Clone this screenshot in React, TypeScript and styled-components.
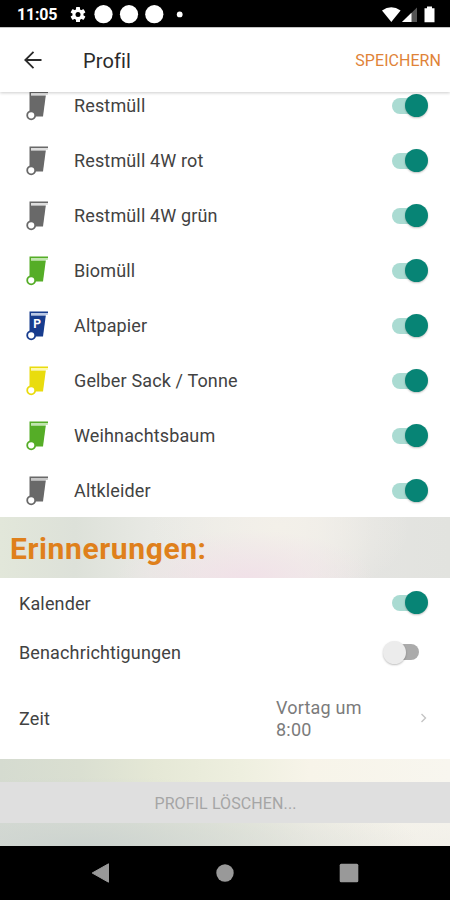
import React from 'react';
import styled, { createGlobalStyle } from 'styled-components';

const GlobalStyle = createGlobalStyle`
  * { box-sizing: border-box; }
  body { margin: 0; background: #fff; font-family: Roboto, "Liberation Sans", sans-serif; }
`;

const Screen = styled.div`
  width: 450px;
  height: 900px;
  display: flex;
  flex-direction: column;
  overflow: hidden;
  background: #fff;
  color: #424242;
`;

const StatusBar = styled.header`
  flex: 0 0 27px;
  display: flex;
  align-items: center;
  justify-content: space-between;
  padding: 2px 14px 0 17px;
  background: #000;
  color: #fff;
`;

const Clock = styled.span`
  width: 53px;
  padding-top: 1px;
  font-size: 16px;
  line-height: 20px;
  font-weight: 700;
  letter-spacing: -0.2px;
`;

const StatusGroup = styled.div`
  display: flex;
  align-items: center;
`;

const Toolbar = styled.div`
  flex: 0 0 65px;
  display: flex;
  align-items: center;
  padding: 2px 9px 0 21px;
  background: #fff;
  border-top: 1px solid #c4c4c4;
  box-shadow: 0 1px 3px rgba(0, 0, 0, 0.2);
  z-index: 1;
`;

const BackButton = styled.button`
  display: flex;
  margin-top: -2px;
  padding: 0;
  border: 0;
  background: none;
`;

const Title = styled.h1`
  flex: 1;
  margin: 0 0 0 38px;
  font-size: 20px;
  font-weight: 400;
  line-height: 24px;
  letter-spacing: 0.1px;
  color: #2a2a2a;
`;

const SaveButton = styled.button`
  padding: 0;
  border: 0;
  background: none;
  font: 400 16px/20px Roboto, sans-serif;
  letter-spacing: 0.05px;
  color: #df8338;
`;

const BinList = styled.ul`
  flex: 0 0 425px;
  display: flex;
  flex-direction: column;
  overflow: hidden;
  margin: 0;
  padding: 0;
  list-style: none;
`;

const BinRow = styled.li`
  flex: 0 0 55px;
  display: flex;
  align-items: center;
  padding: 0 21px 0 26px;

  &:first-child {
    margin-top: -14px;
  }
`;

const Label = styled.span<{ $indent?: number }>`
  flex: 1;
  margin-left: ${({ $indent = 0 }) => $indent}px;
  padding-top: ${({ $indent = 0 }) => ($indent ? 0 : 2)}px;
  font-size: 18px;
  line-height: 22px;
  letter-spacing: 0.14px;
`;

const Track = styled.span<{ $on: boolean }>`
  display: flex;
  align-items: center;
  justify-content: ${({ $on }) => ($on ? 'flex-end' : 'flex-start')};
  width: 28px;
  height: 16px;
  margin-right: ${({ $on }) => ($on ? 9 : 10)}px;
  border-radius: 8px;
  background: ${({ $on }) => ($on ? '#aadbd2' : '#ababab')};
`;

const Knob = styled.span<{ $on: boolean }>`
  flex: 0 0 23px;
  height: 23px;
  margin: ${({ $on }) => ($on ? '0 -8px 0 0' : '0 0 0 -8px')};
  border-radius: 50%;
  background: ${({ $on }) => ($on ? '#078475' : '#ececec')};
  box-shadow: 0 1px 2px rgba(0, 0, 0, 0.25);
`;

const SectionHeader = styled.h2`
  flex: 0 0 61px;
  display: flex;
  align-items: center;
  margin: 0;
  padding: 3px 10px 0;
  background:
    radial-gradient(ellipse 130px 48px at 245px 61px, #f1e1e8 0%, rgba(241, 225, 232, 0) 100%),
    radial-gradient(ellipse 130px 75px at 280px 10px, #f3f0e9 0%, rgba(243, 240, 233, 0) 100%),
    linear-gradient(90deg, #e2e7da 0, #dde1d9 75px, #e8e9e4 150px, #efedea 300px, #e4e4e1 370px, #e2e3df 450px);
  color: #df801b;
  font-size: 30px;
  line-height: 36px;
  letter-spacing: 0.6px;
  font-weight: 700;
`;

const Settings = styled.section`
  flex: 0 0 181px;
  display: flex;
  flex-direction: column;
  background: #fff;
`;

const SettingRow = styled.div<{ $height: number }>`
  flex: 0 0 ${({ $height }) => $height}px;
  display: flex;
  align-items: center;
  padding: 0 21px 0 19px;
`;

const TimeValue = styled.span`
  width: 100px;
  margin-right: 43px;
  padding-top: 2px;
  font-size: 18px;
  line-height: 22px;
  letter-spacing: 0.2px;
  color: #7b7b7b;
`;

const Footer = styled.div`
  flex: 0 0 87px;
  display: flex;
  flex-direction: column;
  justify-content: center;
  background:
    radial-gradient(ellipse 340px 70px at 80px 87px, #ccd3cf 0%, rgba(204, 211, 207, 0) 100%),
    linear-gradient(180deg, rgba(236, 234, 228, 0) 30%, rgba(236, 234, 228, 0.5) 100%),
    linear-gradient(90deg, #d5dbd0 0, #dadfd1 80px, #e5e8d6 155px, #eeefdf 240px, #f7f4e9 310px, #f8f6ef 450px);
`;

const DeleteButton = styled.button`
  height: 41px;
  padding: 2px 0 0 1px;
  border: 0;
  background: #dfdfdf;
  font: 400 16px/20px Roboto, sans-serif;
  letter-spacing: 0.1px;
  color: #a5a5a5;
`;

const NavBar = styled.nav`
  flex: 0 0 54px;
  display: flex;
  align-items: center;
  justify-content: space-between;
  padding: 0 91px;
  background: #000;
`;

function Switch({ on }: { on: boolean }) {
  return (
    <Track $on={on} role="switch" aria-checked={on}>
      <Knob $on={on} />
    </Track>
  );
}

function BinIcon({ color, lid, letter }: { color: string; lid: string; letter?: string }) {
  return (
    <svg width="23" height="30" viewBox="0 0 23 30">
      <path d="M3.5 0.5H22V2H5V22H3.5Z" fill={color} />
      <path d="M5 2H22L21.7 4H5Z" fill={lid} />
      <path d="M4.5 4.5H19.8L17 25.5H7L4.5 20Z" fill={color} />
      <circle cx="5.2" cy="24.3" r="4" fill="#fff" stroke={color} strokeWidth="1.8" />
      {letter && (
        <text x="7.3" y="17" fill="#fff" fontFamily="Roboto" fontSize="12" fontWeight="700">
          {letter}
        </text>
      )}
    </svg>
  );
}

const grey = { color: '#696969', lid: '#dedede' };
const green = { color: '#55ad27', lid: '#c0e5ae' };

const bins = [
  { name: 'Restmüll', ...grey },
  { name: 'Restmüll 4W rot', ...grey },
  { name: 'Restmüll 4W grün', ...grey },
  { name: 'Biomüll', ...green },
  { name: 'Altpapier', color: '#173c8e', lid: '#b9c8e5', letter: 'P' },
  { name: 'Gelber Sack / Tonne', color: '#e9dc0e', lid: '#fff9ad' },
  { name: 'Weihnachtsbaum', ...green },
  { name: 'Altkleider', color: '#696969', lid: '#c6c6c6' },
];

function NotificationIcons() {
  return (
    <svg width="116" height="20" viewBox="0 0 116 20">
      <g transform="translate(8 9.5)" fill="#fff">
        {[0, 60, 120].map((angle) => (
          <rect key={angle} x="-2" y="-7.5" width="4" height="15" rx="0.6" transform={`rotate(${angle})`} />
        ))}
        <circle r="5.5" />
        <circle r="2.5" fill="#000" />
      </g>
      <circle cx="33.5" cy="9.2" r="9.1" fill="#fff" />
      <circle cx="59" cy="9.2" r="9.1" fill="#fff" />
      <circle cx="84.3" cy="9.2" r="9.1" fill="#fff" />
      <circle cx="109.7" cy="9.4" r="2.9" fill="#fff" />
    </svg>
  );
}

function SystemIcons() {
  return (
    <svg width="54" height="18" viewBox="0 0 54 18">
      <path d="M0 4.5Q9.3-1.8 18.6 4.5L9.3 16Z" fill="#fff" />
      <path d="M20 16L35 1.5V16Z" fill="#555" />
      <path d="M20 16L29.5 6.8V16Z" fill="#fff" />
      <path d="M42.5 2.3H45V0.4H50V2.3H52.5V16.2H42.5Z" fill="#fff" />
    </svg>
  );
}

export default function App() {
  return (
    <>
      <GlobalStyle />
      <Screen>
        <StatusBar>
          <StatusGroup>
            <Clock>11:05</Clock>
            <NotificationIcons />
          </StatusGroup>
          <SystemIcons />
        </StatusBar>
        <Toolbar>
          <BackButton aria-label="Zurück">
            <svg width="24" height="24" viewBox="0 0 24 24" fill="none" stroke="#2a2a2a" strokeWidth="1.8">
              <path d="M20.5 12H4.5M12.5 3.8L4.3 12L12.5 20.2" />
            </svg>
          </BackButton>
          <Title>Profil</Title>
          <SaveButton>SPEICHERN</SaveButton>
        </Toolbar>
        <BinList>
          {bins.map(({ name, ...icon }) => (
            <BinRow key={name}>
              <BinIcon {...icon} />
              <Label $indent={25}>{name}</Label>
              <Switch on />
            </BinRow>
          ))}
        </BinList>
        <SectionHeader>Erinnerungen:</SectionHeader>
        <Settings>
          <SettingRow $height={49}>
            <Label>Kalender</Label>
            <Switch on />
          </SettingRow>
          <SettingRow $height={50}>
            <Label>Benachrichtigungen</Label>
            <Switch on={false} />
          </SettingRow>
          <SettingRow $height={82}>
            <Label>Zeit</Label>
            <TimeValue>Vortag um 8:00</TimeValue>
            <svg width="10" height="12" viewBox="0 0 10 12" fill="none" stroke="#c4c4c4" strokeWidth="1.4">
              <path d="M2.5 2L6.5 6L2.5 10" />
            </svg>
          </SettingRow>
        </Settings>
        <Footer>
          <DeleteButton>PROFIL LÖSCHEN...</DeleteButton>
        </Footer>
        <NavBar>
          <svg width="20" height="20" viewBox="0 0 20 20">
            <path d="M1.2 10L17.5 0.8V19.2Z" fill="#999" stroke="#999" strokeLinejoin="round" />
          </svg>
          <svg width="20" height="20" viewBox="0 0 20 20">
            <circle cx="10" cy="10" r="8.7" fill="#999" />
          </svg>
          <svg width="20" height="20" viewBox="0 0 20 20">
            <rect x="0.7" y="0.7" width="18.6" height="18.6" rx="1.5" fill="#999" />
          </svg>
        </NavBar>
      </Screen>
    </>
  );
}
